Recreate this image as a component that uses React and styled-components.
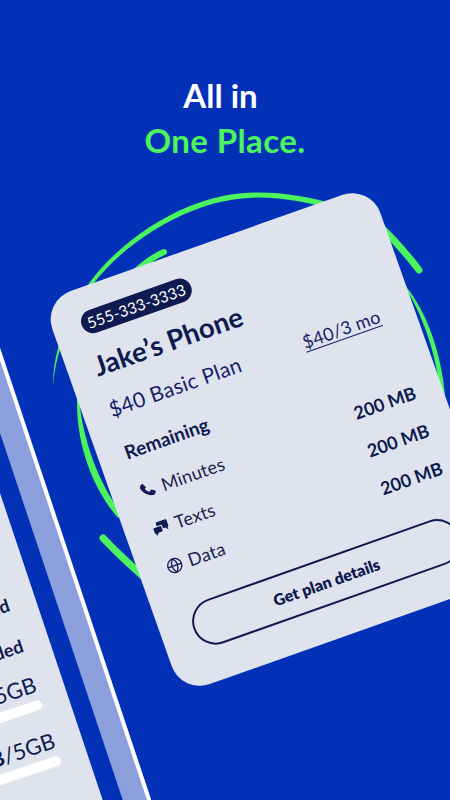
import React from "react";
import styled, { createGlobalStyle } from "styled-components";
import { Globe } from "lucide-react";

const Global = createGlobalStyle`
  html, body { margin: 0; padding: 0; background: #0231b8; }
  * { box-sizing: border-box; }
`;

const FONT = `Lato, "Noto Sans", sans-serif`;
const NAVY = "#0f1a50";

const Page = styled.div`
  position: relative;
  width: 450px;
  height: 800px;
  overflow: hidden;
  background: #0231b8;
  font-family: ${FONT};
  display: flex;
  flex-direction: column;
`;

const Ring = styled.svg`
  position: absolute;
  inset: 0;
  width: 450px;
  height: 800px;
`;

const Heading = styled.h1`
  position: relative;
  margin: 0;
  padding-top: 73px;
  text-align: center;
  font-size: 33px;
  font-weight: 700;
  line-height: 45px;
`;

const HeadLine = styled.div`
  color: ${(p) => p.$color};
  padding-right: ${(p) => p.$inset || 0}px;
  letter-spacing: ${(p) => p.$spacing || 0}px;
`;

const Card = styled.section`
  position: relative;
  flex: none;
  width: 348px;
  height: 417px;
  margin: 68px 0 0 102px;
  padding: 24px 33px 34px 27px;
  border-radius: 30px;
  background: #dfe3ed;
  color: ${NAVY};
  transform: rotate(-19.5deg);
  display: flex;
  flex-direction: column;
`;

const Pill = styled.div`
  align-self: flex-start;
  height: 24px;
  padding: 0 6px;
  margin-left: 2px;
  border-radius: 12px;
  background: #0f1a50;
  color: #fff;
  font-size: 15.5px;
  line-height: 24px;
  letter-spacing: 0.2px;
`;

const Title = styled.h2`
  margin: 13px 0 0;
  font-size: 27.5px;
  font-weight: 700;
  line-height: 38px;
  white-space: nowrap;
`;

const PlanRow = styled.div`
  margin-top: 12px;
  display: flex;
  justify-content: space-between;
  align-items: baseline;
  padding-right: 2px;
`;

const PlanName = styled.div`
  font-size: 21px;
  line-height: 28px;
  letter-spacing: 0.3px;
  color: #17216a;
`;

const Price = styled.div`
  font-size: 18px;
  line-height: 24px;
  text-decoration: underline;
  text-underline-offset: 3px;
  letter-spacing: 0.2px;
  color: #17216a;
`;

const Remaining = styled.h3`
  margin: 20px 0 0;
  font-size: 19px;
  font-weight: 700;
  line-height: 24px;
`;

const Rows = styled.div`
  margin-top: 18px;
  display: flex;
  flex-direction: column;
  gap: 16px;
`;

const Row = styled.div`
  height: 24px;
  display: flex;
  align-items: center;
  margin-right: -6px;
`;

const IconSlot = styled.span`
  width: 18px;
  height: 18px;
  margin: 0 6px 0 0;
  display: inline-flex;
  align-items: center;
  justify-content: center;
  color: ${NAVY};
  svg { display: block; }
`;

const RowLabel = styled.span`
  font-size: 18px;
  font-weight: 400;
  letter-spacing: 0.2px;
  color: #1a2250;
`;

const RowValue = styled.span`
  margin-left: auto;
  margin-bottom: 7px;
  font-size: 18px;
  font-weight: 700;
`;

const DetailsButton = styled.button`
  margin: auto 0 0 6px;
  height: 47px;
  width: 282px;
  flex: none;
  border: 2px solid ${NAVY};
  border-radius: 24px;
  background: transparent;
  color: ${NAVY};
  font-family: ${FONT};
  font-size: 16px;
  font-weight: 800;
`;

const BackDevice = styled.div`
  position: absolute;
  left: -241px;
  top: 240px;
  width: 346px;
  height: 900px;
  transform: rotate(-18.5deg);
  display: flex;
`;

const BackCard = styled.div`
  flex: none;
  width: 300px;
  background: #dfe3ed;
  color: ${NAVY};
  padding: 381px 27px 0 0;
  display: flex;
  flex-direction: column;
  align-items: flex-end;
`;

const BackLabel = styled.div`
  font-size: 18px;
  font-weight: 700;
  line-height: 24px;
  margin-bottom: ${(p) => p.$gap}px;
  white-space: nowrap;
`;

const Usage = styled.div`
  font-size: 22px;
  line-height: 26px;
  font-weight: 400;
  white-space: nowrap;
  b { font-weight: 700; }
`;

const Track = styled.div`
  width: 200px;
  height: 10px;
  margin: 3px 0 20px;
  border-radius: 5px;
  background: #fff;
`;

const BlueGap = styled.div`
  flex: none;
  width: 19px;
`;

const Band = styled.div`
  flex: none;
  width: 27px;
  background: #8a9fdb;
  border-right: 4px solid #fff;
`;

const GREEN = "#4bf45d";

const PhoneIcon = () => (
  <svg width="20" height="20" viewBox="0 0 24 24" fill="currentColor" aria-hidden="true">
    <path d="M6.8 2.6C7.6 2.2 8.4 2.5 8.9 3.3L10.9 6.9C11.3 7.6 11.1 8.4 10.5 8.8L8.9 9.9C9.8 12.6 11.7 14.6 14.3 15.6L15.5 14C16 13.4 16.8 13.3 17.5 13.7L21 15.9C21.7 16.4 21.9 17.2 21.5 18L20.6 19.6C19.9 20.9 18.5 21.5 17 21.2C10.4 19.8 5 14.3 3.5 7.6C3.2 6.1 3.8 4.6 5.1 3.7Z" />
  </svg>
);

const ChatIcon = () => (
  <svg width="20" height="20" viewBox="0 0 24 24" fill="currentColor" aria-hidden="true">
    <path d="M9 3.5H21C21.8 3.5 22.5 4.2 22.5 5V12.5C22.5 13.3 21.8 14 21 14V17.5L17.5 14H14.5V10.5C14.5 9.4 13.6 8.5 12.5 8.5H7.5V5C7.5 4.2 8.2 3.5 9 3.5Z" />
    <path d="M3 10H12C12.6 10 13 10.4 13 11V16.5C13 17.1 12.6 17.5 12 17.5H7.5L3.5 21.5V17.5H3C2.4 17.5 2 17.1 2 16.5V11C2 10.4 2.4 10 3 10Z" />
  </svg>
);

export default function App() {
  return (
    <Page>
      <Global />
      <BackDevice>
        <BackCard>
          <BackLabel $gap={19}>Used</BackLabel>
          <BackLabel $gap={16}>Included</BackLabel>
          <Usage>10GB/15GB</Usage>
          <Track />
          <Usage><b>2GB</b>/5GB</Usage>
          <Track />
        </BackCard>
        <BlueGap />
        <Band />
      </BackDevice>
      <Ring viewBox="0 0 450 800" aria-hidden="true">
        <g fill={GREEN}>
          <path d="M53 386C53 350 68 312 90 282C112 252 150 222 190 206C212 197 235 192.5 258 192.5C285 192.5 312 197 340 206L338 211C312 203 285 197.5 258 197.5C236 198 214 202 192 211C154 226 116 254 93 284C71 314 56 350 53 386Z" />
          <path d="M77 398C76 440 90 485 118 518L122 514C100 485 84 445 79 400Z" />
          <path d="M400 280C425 305 444 355 446 410L441 410C440 360 422 310 400 280Z" />
        </g>
        <g fill="none" stroke={GREEN} strokeLinecap="round">
          <path d="M164 252Q150 258 135 272" strokeWidth="6" />
          <path d="M378 224Q400 245 419 270" strokeWidth="7" />
          <path d="M103 538Q120 556 145 578" strokeWidth="7" />
        </g>
      </Ring>
      <Heading>
        <HeadLine $color="#ffffff" $inset={9}>All in</HeadLine>
        <HeadLine $color={GREEN} $spacing={0.4}>One Place.</HeadLine>
      </Heading>
      <Card>
        <Pill>555-333-3333</Pill>
        <Title>Jake’s Phone</Title>
        <PlanRow>
          <PlanName>$40 Basic Plan</PlanName>
          <Price>$40/3 mo</Price>
        </PlanRow>
        <Remaining>Remaining</Remaining>
        <Rows>
          <Row>
            <IconSlot><PhoneIcon /></IconSlot>
            <RowLabel>Minutes</RowLabel>
            <RowValue>200 MB</RowValue>
          </Row>
          <Row>
            <IconSlot><ChatIcon /></IconSlot>
            <RowLabel>Texts</RowLabel>
            <RowValue>200 MB</RowValue>
          </Row>
          <Row>
            <IconSlot><Globe size={17} strokeWidth={1.8} /></IconSlot>
            <RowLabel>Data</RowLabel>
            <RowValue>200 MB</RowValue>
          </Row>
        </Rows>
        <DetailsButton>Get plan details</DetailsButton>
      </Card>
    </Page>
  );
}
